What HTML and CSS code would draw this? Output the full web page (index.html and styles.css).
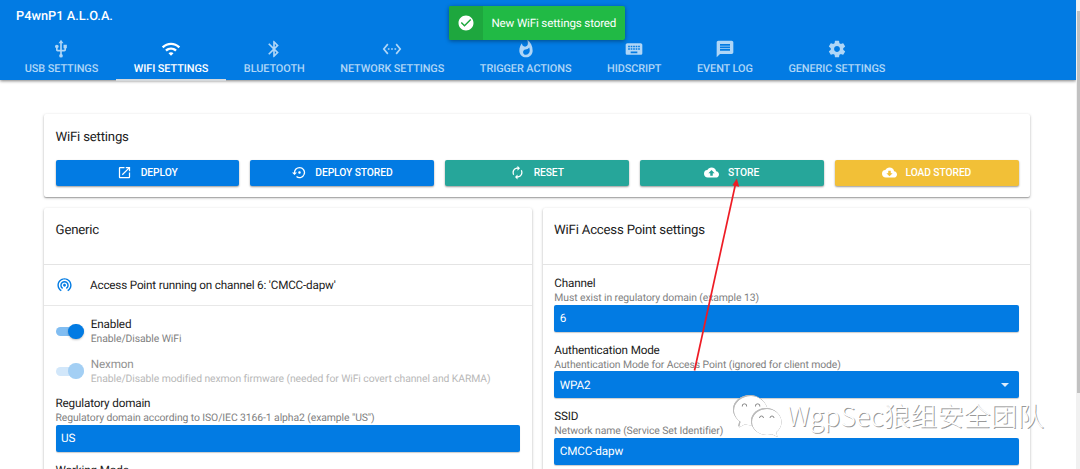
FILE: index.html
```html
<!DOCTYPE html>
<html lang="en">
<head>
<meta charset="utf-8">
<title>P4wnP1 A.L.O.A.</title>
<link rel="stylesheet" href="styles.css">
</head>
<body>
<div class="window">
<div class="page">
  <header class="header">
    <div class="title">P4wnP1 A.L.O.A.</div>
    <nav class="tabs">
      <a class="tab"><svg class="icon" viewBox="0 0 24 24"><path d="M15 7v4h1v2h-3V5h2l-3-4-3 4h2v8H8v-2.070c.7-.37 1.200-1.080 1.200-1.930 0-1.210-.99-2.200-2.200-2.200S4.800 7.790 4.800 9c0 .85.5 1.560 1.200 1.930V13c0 1.110.89 2 2 2h3v3.050c-.71.37-1.200 1.100-1.200 1.950a2.200 2.200 0 0 0 4.400 0c0-.85-.49-1.580-1.200-1.950V15h3c1.110 0 2-.89 2-2v-2h1V7h-4z"/></svg><span>USB SETTINGS</span></a>
      <a class="tab active"><svg class="icon" viewBox="0 0 24 24"><path d="M1 9l2 2c4.970-4.970 13.030-4.970 18 0l2-2C16.930 2.930 7.080 2.930 1 9zm8 8l3 3 3-3c-1.650-1.660-4.340-1.660-6 0zm-4-4l2 2c2.760-2.760 7.240-2.760 10 0l2-2C15.140 9.140 8.870 9.140 5 13z"/></svg><span>WIFI SETTINGS</span></a>
      <a class="tab"><svg class="icon" viewBox="0 0 24 24"><path d="M17.710 7.710L12 2h-1v7.590L6.410 5 5 6.410 10.590 12 5 17.590 6.410 19 11 14.410V22h1l5.710-5.710-4.300-4.290 4.300-4.290zM13 5.830l1.880 1.880L13 9.590V5.830zm1.880 10.460L13 18.170v-3.760l1.880 1.880z"/></svg><span>BLUETOOTH</span></a>
      <a class="tab"><svg class="icon" viewBox="0 0 24 24"><path d="M7.770 6.760L6.230 5.480.82 12l5.410 6.520 1.540-1.280L3.420 12l4.350-5.240zM7 13h2v-2H7v2zm10-2h-2v2h2v-2zm-6 2h2v-2h-2v2zm6.770-7.520l-1.540 1.280L20.580 12l-4.350 5.240 1.540 1.280L23.180 12l-5.410-6.520z"/></svg><span>NETWORK SETTINGS</span></a>
      <a class="tab"><svg class="icon" viewBox="0 0 24 24"><path d="M13.500.67s.74 2.650.74 4.800c0 2.060-1.350 3.730-3.410 3.730-2.070 0-3.630-1.670-3.630-3.730l.03-.36C5.210 7.510 4 10.620 4 14c0 4.420 3.580 8 8 8s8-3.580 8-8C20 8.610 17.410 3.800 13.500.67zM11.710 19c-1.780 0-3.220-1.400-3.220-3.140 0-1.620 1.050-2.760 2.810-3.120 1.770-.36 3.600-1.210 4.620-2.580.39 1.290.59 2.650.59 4.040 0 2.650-2.150 4.800-4.800 4.800z"/></svg><span>TRIGGER ACTIONS</span></a>
      <a class="tab"><svg class="icon" viewBox="0 0 24 24"><path d="M20 5H4c-1.100 0-1.990.9-1.990 2L2 17c0 1.100.9 2 2 2h16c1.100 0 2-.9 2-2V7c0-1.100-.9-2-2-2zm-9 3h2v2h-2V8zm0 3h2v2h-2v-2zM8 8h2v2H8V8zm0 3h2v2H8v-2zm-1 2H5v-2h2v2zm0-3H5V8h2v2zm9 7H8v-2h8v2zm0-4h-2v-2h2v2zm0-3h-2V8h2v2zm3 3h-2v-2h2v2zm0-3h-2V8h2v2z"/></svg><span>HIDSCRIPT</span></a>
      <a class="tab"><svg class="icon" viewBox="0 0 24 24"><path d="M20 2H4c-1.100 0-1.990.9-1.990 2L2 22l4-4h14c1.100 0 2-.9 2-2V4c0-1.100-.9-2-2-2zM6 9h12v2H6V9zm12 5H6v-2h12v2zm0-6H6V6h12v2z"/></svg><span>EVENT LOG</span></a>
      <a class="tab"><svg class="icon" viewBox="0 0 24 24"><path d="M19.430 12.980c.04-.32.07-.64.07-.98s-.03-.66-.07-.98l2.110-1.650c.19-.15.24-.42.12-.64l-2-3.460c-.12-.22-.39-.3-.61-.22l-2.490 1c-.52-.4-1.080-.73-1.690-.98l-.38-2.650A.49.49 0 0 0 14 2h-4c-.25 0-.46.18-.49.42l-.38 2.650c-.61.25-1.170.59-1.690.98l-2.490-1c-.23-.09-.49 0-.61.22l-2 3.460c-.13.22-.07.49.12.64l2.110 1.650c-.04.32-.07.65-.07.98s.03.66.07.98l-2.110 1.650c-.19.15-.24.42-.12.64l2 3.460c.12.22.39.3.61.22l2.490-1c.52.4 1.080.73 1.690.98l.38 2.650c.03.24.24.42.49.42h4c.25 0 .46-.18.49-.42l.38-2.650c.61-.25 1.170-.59 1.690-.98l2.490 1c.23.09.49 0 .61-.22l2-3.460c.12-.22.07-.49-.12-.64l-2.110-1.650zM12 15.500c-1.930 0-3.500-1.570-3.500-3.500s1.570-3.500 3.500-3.500 3.500 1.570 3.500 3.500-1.570 3.500-3.500 3.500z"/></svg><span>GENERIC SETTINGS</span></a>
    </nav>
  </header>

  <main class="content">
    <section class="card actions">
      <h2 class="heading">WiFi settings</h2>
      <div class="buttons">
        <button class="btn"><svg viewBox="0 0 24 24"><path d="M19 19H5V5h7V3H5c-1.110 0-2 .9-2 2v14c0 1.100.89 2 2 2h14c1.100 0 2-.9 2-2v-7h-2v7zM14 3v2h3.590l-9.830 9.830 1.410 1.410L19 6.410V10h2V3h-7z"/></svg><span>DEPLOY</span></button>
        <button class="btn"><svg viewBox="0 0 24 24"><path d="M14 12c0-1.100-.9-2-2-2s-2 .9-2 2 .9 2 2 2 2-.9 2-2zm-2-9a9 9 0 0 0-9 9H0l4 4 4-4H5c0-3.870 3.130-7 7-7s7 3.130 7 7a6.995 6.995 0 0 1-11.060 5.700l-1.420 1.440A9 9 0 1 0 12 3z"/></svg><span>DEPLOY STORED</span></button>
        <button class="btn teal"><svg viewBox="0 0 24 24"><path d="M12 6v3l4-4-4-4v3c-4.420 0-8 3.580-8 8 0 1.570.46 3.030 1.240 4.260L6.700 14.800A5.870 5.870 0 0 1 6 12c0-3.310 2.690-6 6-6zm6.760 1.740L17.300 9.200c.44.84.7 1.790.7 2.800 0 3.310-2.690 6-6 6v-3l-4 4 4 4v-3c4.420 0 8-3.580 8-8 0-1.570-.46-3.030-1.240-4.260z"/></svg><span>RESET</span></button>
        <button class="btn teal"><svg viewBox="0 0 24 24"><path d="M19.350 10.040A7.490 7.490 0 0 0 12 4C9.110 4 6.600 5.640 5.350 8.040A5.994 5.994 0 0 0 0 14c0 3.310 2.690 6 6 6h13c2.760 0 5-2.240 5-5 0-2.640-2.050-4.780-4.650-4.960zM14 13v4h-4v-4H7l5-5 5 5h-3z"/></svg><span>STORE</span></button>
        <button class="btn amber"><svg viewBox="0 0 24 24"><path d="M19.350 10.040A7.490 7.490 0 0 0 12 4C9.110 4 6.600 5.640 5.350 8.040A5.994 5.994 0 0 0 0 14c0 3.310 2.690 6 6 6h13c2.760 0 5-2.240 5-5 0-2.640-2.050-4.780-4.650-4.960zM17 13l-5 5-5-5h3V9h4v4h3z"/></svg><span>LOAD STORED</span></button>
      </div>
    </section>

    <div class="columns">
      <section class="card panel">
        <h2 class="heading panel-heading">Generic</h2>
        <div class="status">
          <svg viewBox="0 0 24 24"><path d="M12 11c-1.100 0-2 .9-2 2s.9 2 2 2 2-.9 2-2-.9-2-2-2zm6 2c0-3.310-2.690-6-6-6s-6 2.690-6 6c0 2.220 1.210 4.150 3 5.190l1-1.740c-1.190-.7-2-1.970-2-3.450 0-2.210 1.790-4 4-4s4 1.790 4 4c0 1.480-.81 2.750-2 3.450l1 1.740c1.790-1.040 3-2.970 3-5.190zM12 3C6.480 3 2 7.480 2 13c0 3.700 2.010 6.920 4.990 8.650l1-1.730C5.610 18.530 4 15.960 4 13c0-4.420 3.580-8 8-8s8 3.580 8 8c0 2.960-1.610 5.530-4 6.920l1 1.730c2.990-1.730 5-4.950 5-8.650 0-5.520-4.480-10-10-10z"/></svg>
          <span>Access Point running on channel 6: 'CMCC-dapw'</span>
        </div>
        <div class="settings">
          <div class="switch-row"><i class="toggle"></i><div><div class="label">Enabled</div><div class="hint">Enable/Disable WiFi</div></div></div>
          <div class="switch-row disabled"><i class="toggle"></i><div><div class="label">Nexmon</div><div class="hint">Enable/Disable modified nexmon firmware (needed for WiFi covert channel and KARMA)</div></div></div>
          <div class="field"><div class="label">Regulatory domain</div><div class="hint">Regulatory domain according to ISO/IEC 3166-1 alpha2 (example "US")</div><div class="input">US</div></div>
          <div class="field"><div class="label">Working Mode</div></div>
        </div>
      </section>

      <section class="card panel">
        <h2 class="heading panel-heading">WiFi Access Point settings</h2>
        <div class="settings access-point">
          <div class="field"><div class="label">Channel</div><div class="hint">Must exist in regulatory domain (example 13)</div><div class="input">6</div></div>
          <div class="field"><div class="label">Authentication Mode</div><div class="hint">Authentication Mode for Access Point (ignored for client mode)</div><div class="input">WPA2<i class="caret"></i></div></div>
          <div class="field"><div class="label">SSID</div><div class="hint">Network name (Service Set Identifier)</div><div class="input">CMCC-dapw</div></div>
        </div>
      </section>
    </div>
  </main>
</div>
<div class="scrollbar"><div class="thumb"></div></div>
</div>

<div class="toast">
  <div class="toast-icon"><svg viewBox="0 0 24 24"><path d="M12 2C6.480 2 2 6.480 2 12s4.480 10 10 10 10-4.480 10-10S17.520 2 12 2zm-2 15l-5-5 1.410-1.410L10 14.170l7.590-7.590L19 8l-9 9z"/></svg></div>
  <div class="toast-text">New WiFi settings stored</div>
</div>

<svg class="arrow" viewBox="0 0 1080 469"><path d="M694.500 370.500L735.500 184" fill="none" stroke="#ee1c25" stroke-width="1.700"/><path d="M736.800 178.500l2.400 8.200-6.800-1.400z" fill="#ee1c25"/></svg>

<div class="watermark">
  <svg viewBox="0 0 50 44">
    <g class="bubble">
      <path d="M18 1C8.500 1 1 7.500 1 15.500c0 4.500 2.500 8.500 6.500 11.300L6 32.500l6-3.200c2 .7 4 1 7 1C18 20.500 25 14 34.500 14 33 6.500 26 1 18 1z"/>
    </g>
    <g class="bubble">
      <path d="M34 14c-8.500 0-15 5.800-15 13s6.500 13 15 13c1.800 0 3.500-.3 5-.8l5.500 2.800-1.300-4.700C46.500 35 48.500 31.200 48.500 27c0-7.200-6.300-13-14.500-13z"/>
    </g>
    <g class="eyes"><path d="M9.300 11.500a2.200 2.200 0 1 1 4.300 0M22.500 11.500a2.200 2.200 0 1 1 4.300 0M26.500 23a2 2 0 1 1 4 0M37 23a2 2 0 1 1 4 0"/></g>
  </svg>
  <span><span class="latin">WgpSec</span>狼组安全团队</span>
</div>
</body>
</html>
```

FILE: styles.css
```css
* { box-sizing: border-box; }

body {
  margin: 0;
  height: 469px;
  overflow: hidden;
  background: #fff;
  color: #212121;
  font-family: Roboto, "Liberation Sans", sans-serif;
  text-rendering: geometricPrecision;
}

.window { display: flex; height: 469px; overflow: hidden; }
.page { flex: 1; min-width: 0; }
.scrollbar { width: 4.300px; padding-top: 11px; background: #f1f1f1; }
.thumb { height: 382px; margin-left: 1px; background: #c1c1c1; }

.header {
  height: 80px;
  background: #027be3;
  color: #fff;
  box-shadow: 0 1px 3px rgba(0, 0, 0, .5);
}
.title { height: 39px; padding: 8.500px 0 0 16px; font-size: 12.800px; line-height: 16px; font-weight: 500; }
.tabs { display: flex; height: 41px; padding-left: 7px; }
.tab {
  display: flex;
  flex-direction: column;
  align-items: center;
  height: 42px;
  padding: 0 17.800px;
  font-size: 10.900px;
  letter-spacing: -.08px;
  line-height: 14px;
  font-weight: 500;
  color: #afd6f7;
  white-space: nowrap;
}
.tab.active { color: #fff; border-bottom: 2px solid #d5d9dc; }
.icon { width: 20px; height: 20px; margin-bottom: 3px; fill: currentColor; }

.content { padding: 34px 45.700px 0 44px; }
.card {
  background: #fff;
  border-radius: 2px;
  box-shadow: 0 1px 3px rgba(0, 0, 0, .25), 0 1px 1px rgba(0, 0, 0, .22);
}
.heading { margin: 0; font-size: 13.200px; letter-spacing: -.2px; line-height: 18px; font-weight: 400; }
.actions { height: 82.500px; padding: 15px 11.500px 0; }
.buttons { display: grid; grid-template-columns: repeat(5, 1fr); gap: 11px; margin-top: 12.500px; }
.btn {
  display: flex;
  align-items: center;
  justify-content: center;
  gap: 8.500px;
  height: 26px;
  padding: 0;
  border: 0;
  border-radius: 2px;
  background: #027be3;
  color: #fff;
  font: 500 10.300px/14px Roboto, sans-serif;
  letter-spacing: -.1px;
  box-shadow: 0 1px 2px rgba(0, 0, 0, .4);
}
.btn svg { width: 15px; height: 15px; fill: currentColor; }
.teal { background: #26a69a; }
.amber { background: #f2c037; }

.columns { display: grid; grid-template-columns: 1fr 1fr; gap: 11px; margin-top: 11.500px; }
.panel { height: 300px; }
.panel-heading { height: 57px; padding: 14px 11.600px 0; border-bottom: 1px solid #e4e4e4; }
.status {
  display: flex;
  align-items: center;
  gap: 17px;
  height: 40.500px;
  padding: 0 12px;
  border-bottom: 1px solid #e8e8e8;
  font-size: 11.700px;
  letter-spacing: -.18px;
}
.status svg { width: 17px; height: 17px; fill: #027be3; }
.settings { padding: 10.500px 11.500px 0; }
.access-point { padding-top: 10px; padding-left: 11.800px; }
.label { font-size: 11.700px; letter-spacing: -.16px; line-height: 16px; }
.hint { font-size: 10.400px; letter-spacing: -.09px; line-height: 14px; color: #808080; white-space: nowrap; }
.switch-row { display: flex; gap: 7.300px; height: 39.500px; }
.toggle {
  position: relative;
  width: 28px;
  height: 9px;
  margin-top: 11px;
  border-radius: 5px;
  background: #81bdf1;
}
.toggle::after {
  content: "";
  position: absolute;
  top: -3.500px;
  right: 0;
  width: 15.500px;
  height: 15.500px;
  border-radius: 50%;
  background: #027be3;
  box-shadow: 0 1px 2px rgba(0, 0, 0, .25);
}
.disabled .label { color: #929292; }
.disabled .hint { color: #b8b8b8; }
.disabled .toggle { background: #d2e7fa; }
.disabled .toggle::after { background: #a3cff4; box-shadow: none; }
.field { height: 66.500px; }
.input {
  display: flex;
  align-items: center;
  justify-content: space-between;
  height: 27px;
  margin-top: -.5px;
  padding: 0 10px 0 5.500px;
  border-radius: 2px;
  background: #027be3;
  color: #fff;
  font-size: 11.700px;
  letter-spacing: -.14px;
  box-shadow: 0 1px 1px rgba(0, 0, 0, .2);
}
.caret { border: 4px solid transparent; border-top-color: #dcecfb; border-bottom: 0; }

.toast {
  position: absolute;
  top: 6px;
  left: 449px;
  display: flex;
  width: 176px;
  height: 34px;
  border-radius: 2px;
  overflow: hidden;
  background: #21ba45;
  color: #fff;
  box-shadow: 0 1px 4px rgba(0, 0, 0, .4);
}
.toast-icon { display: flex; align-items: center; justify-content: center; width: 34px; background: #1ea73e; }
.toast-icon svg { width: 18px; height: 18px; fill: #fff; }
.toast-text { padding-left: 8.500px; font-size: 11.600px; letter-spacing: -.15px; line-height: 34px; white-space: nowrap; }

.arrow { position: absolute; top: 0; left: 0; width: 1080px; height: 469px; }

.watermark {
  position: absolute;
  top: 395px;
  left: 733px;
  display: flex;
  align-items: center;
  gap: 4px;
  color: #fff;
  font: 300 26.700px/40px "Noto Sans CJK SC", sans-serif;
  white-space: nowrap;
  text-shadow: 1px 1px 0 #999;
}
.watermark svg { width: 50px; height: 44px; overflow: visible; }
.watermark > span { height: 44px; }
.latin { letter-spacing: .1px; }
.bubble { fill: #fff; filter: drop-shadow(.7px .7px .4px #777) drop-shadow(-.3px -.3px .2px #bbb); }
.eyes { fill: none; stroke: #888; stroke-width: 1; }
```
